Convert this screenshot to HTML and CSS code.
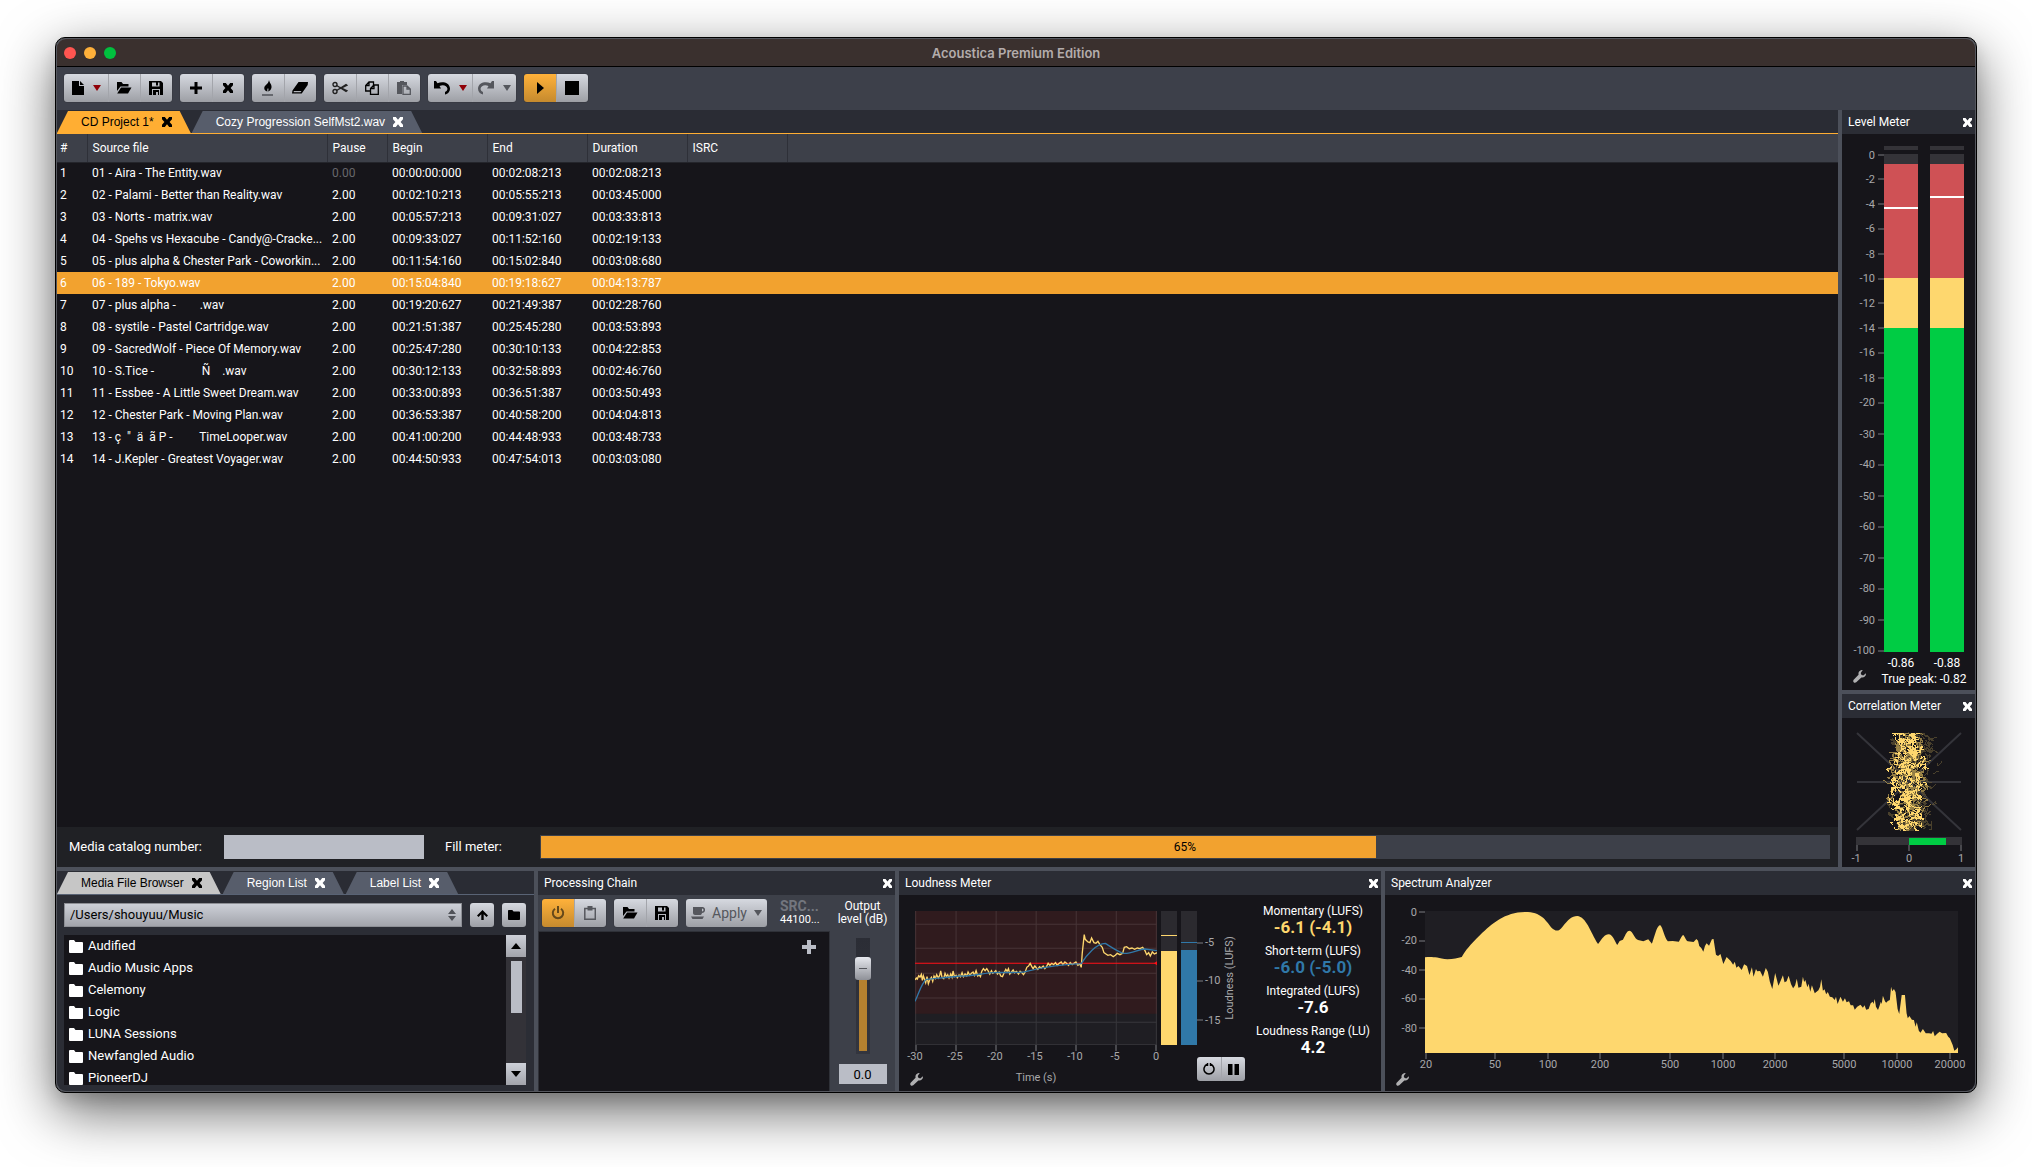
FILE: index.html
```html
<!DOCTYPE html>
<html lang="en">
<head>
<meta charset="utf-8">
<title>Acoustica Premium Edition</title>
<link rel="stylesheet" href="styles.css">
</head>
<body>
<svg class="defs" aria-hidden="true">
  <symbol id="i-x" viewBox="0 0 10 10"><path d="M0 2.2V0h2.8L5 2.8 7.2 0H10v2.2L7.6 5 10 7.8V10H7.2L5 7.2 2.8 10H0V7.8L2.400 5z"/></symbol>
  <symbol id="i-folder" viewBox="0 0 14 13"><path d="M1 0h4l1.500 2H13a1 1 0 0 1 1 1v9a1 1 0 0 1-1 1H1a1 1 0 0 1-1-1V1a1 1 0 0 1 1-1z"/></symbol>
  <symbol id="i-open" viewBox="0 0 16 14"><path d="M1 1h4.500l1.500 2h5.500v2.500H4.500L1 10z"/><path d="M5 6.500h10.500L12 12.500H1.200z"/></symbol>
  <symbol id="i-save" viewBox="0 0 14 14"><path fill-rule="evenodd" d="M0 0h12l2 2v12H0zM3 1.500v4h7.500v-4H9v3H7v-3zM3 8v6h8V8z"/><path d="M4 9h6v5H9v-3H7v3H4z"/></symbol>
  <symbol id="i-wrench" viewBox="0 0 14 14"><path d="M10.500 0 8.300 3.200l.7 2 2 .7L14 3.500c.3 3-2.300 5.200-5 4.500L3.500 13.300C1.500 14.800-.8 12.500.7 10.500L6 5C5.300 2 7.500-.3 10.500 0z"/></symbol>
  <symbol id="i-down" viewBox="0 0 8 6"><path d="M0 0h8L4 6z"/></symbol>
</svg>

<main class="window">
  <header class="titlebar">
    <div class="lights"><i class="red"></i><i class="amber"></i><i class="green"></i></div>
    <h1>Acoustica Premium Edition</h1>
  </header>

  <nav class="toolbar" aria-label="Main toolbar">
    <div class="group">
      <button class="wide" aria-label="New"><svg width="12" height="14" viewBox="0 0 12 14"><path d="M0 0h7v5h5v9H0z"/><path d="M8 0l4 4H8z"/></svg><svg class="caret" width="8" height="6"><use href="#i-down"/></svg></button>
      <button aria-label="Open"><svg width="16" height="14"><use href="#i-open"/></svg></button>
      <button aria-label="Save"><svg width="14" height="14"><use href="#i-save"/></svg></button>
    </div>
    <div class="group">
      <button aria-label="Add"><svg width="12" height="12" viewBox="0 0 12 12"><path d="M4.500 0h3v4.500H12v3H7.500V12h-3V7.500H0v-3h4.500z"/></svg></button>
      <button aria-label="Remove"><svg width="10" height="10"><use href="#i-x"/></svg></button>
    </div>
    <div class="group">
      <button aria-label="Burn"><svg width="12" height="16" viewBox="0 0 12 16"><path d="M7 0c.5 3 3 4.500 2.500 7.500C9.200 9.800 7.500 11 6 11.500c.8-1.500.5-2.500 0-3.500-.6 1-1 2-.5 3.500C3 11 2 9.500 2.300 7.500 3 5 6.500 4 7 0z"/><path fill="#66686e" d="M0 14h11v2H0z"/></svg></button>
      <button aria-label="Erase"><svg width="16" height="12" viewBox="0 0 16 12"><path fill-rule="evenodd" d="M6.500 0H16l-.3 3-6 8.500H0L.5 8.500zM1.800 9l-.2 1.300h6.900L9.500 9z"/></svg></button>
    </div>
    <div class="group">
      <button aria-label="Cut"><svg width="16" height="14" viewBox="0 0 16 14" fill="none" stroke="#222" stroke-width="1.400"><circle cx="3" cy="3.500" r="2"/><circle cx="3" cy="10.500" r="2"/><path d="M4.700 4.500 14 10.500l1-.8-7.500-3.500M4.700 9.500 14 3.500l1 .8-7.500 3.500"/></svg></button>
      <button aria-label="Copy"><svg width="14" height="14" viewBox="0 0 14 14" fill="none" stroke="#000" stroke-width="1.300"><path d="M5.500 10H.7V4.500L4 1h4.500v3.500M.7 4.500H4V1"/><path d="M5.500 7.500 9 4h4.300v9.300H5.500zM5.500 7.500H9V4"/></svg></button>
      <button class="dim" aria-label="Paste"><svg width="14" height="14" viewBox="0 0 14 14"><path d="M0 1h3V0h4v1h3v3H5v9H0z"/><path fill="none" stroke="#55575d" stroke-width="1.300" d="M6 5h4l3.300 3v5.300H6zM10 5v3h3.300"/></svg></button>
    </div>
    <div class="group">
      <button class="wide" aria-label="Undo"><svg width="16" height="14" viewBox="0 0 16 14"><path d="M0 0h2l1.500 2.200C8 0 15.500 1 16 7.500c0 3-2 5.500-5 6V11c2-.8 2.500-2 2.400-3.500C13 4.500 9 3.200 5.500 5L7 7.500H0z"/></svg><svg class="caret" width="8" height="6"><use href="#i-down"/></svg></button>
      <button class="wide dim" aria-label="Redo"><svg width="16" height="14" viewBox="0 0 16 14"><path d="M16 0h-2l-1.500 2.200C8 0 .5 1 0 7.500c0 3 2 5.500 5 6V11c-2-.8-2.500-2-2.400-3.500C3 4.500 7 3.200 10.500 5L9 7.500h7z"/></svg><svg width="8" height="6"><use href="#i-down"/></svg></button>
    </div>
    <div class="group">
      <button class="on" aria-label="Play"><svg width="7" height="12" viewBox="0 0 7 12"><path d="M0 0l7 6-7 6z"/></svg></button>
      <button aria-label="Stop"><svg width="14" height="14" viewBox="0 0 14 14"><path d="M0 0h14v14H0z"/></svg></button>
    </div>
  </nav>

  <div class="workspace">
    <section class="project">
      <div class="tabs gold">
        <div class="tab active"><button>CD Project 1*</button><button class="x" aria-label="Close CD Project 1"><svg width="10" height="10"><use href="#i-x"/></svg></button></div>
        <div class="tab"><button>Cozy Progression SelfMst2.wav</button><button class="x" aria-label="Close Cozy Progression"><svg width="10" height="10"><use href="#i-x"/></svg></button></div>
      </div>
      <div class="tracks">
        <table>
          <colgroup><col class="c-num"><col class="c-file"><col class="c-pause"><col class="c-time"><col class="c-time"><col class="c-time"><col class="c-time"><col></colgroup>
          <thead><tr><th>#</th><th>Source file</th><th>Pause</th><th>Begin</th><th>End</th><th>Duration</th><th>ISRC</th><th></th></tr></thead>
          <tbody>
            <tr><td>1</td><td>01 - Aira - The Entity.wav</td><td class="off">0.00</td><td>00:00:00:000</td><td>00:02:08:213</td><td>00:02:08:213</td><td></td><td></td></tr>
            <tr><td>2</td><td>02 - Palami - Better than Reality.wav</td><td>2.00</td><td>00:02:10:213</td><td>00:05:55:213</td><td>00:03:45:000</td><td></td><td></td></tr>
            <tr><td>3</td><td>03 - Norts - matrix.wav</td><td>2.00</td><td>00:05:57:213</td><td>00:09:31:027</td><td>00:03:33:813</td><td></td><td></td></tr>
            <tr><td>4</td><td>04 - Spehs vs Hexacube - Candy@-Cracke...</td><td>2.00</td><td>00:09:33:027</td><td>00:11:52:160</td><td>00:02:19:133</td><td></td><td></td></tr>
            <tr><td>5</td><td>05 - plus alpha &amp; Chester Park - Coworkin...</td><td>2.00</td><td>00:11:54:160</td><td>00:15:02:840</td><td>00:03:08:680</td><td></td><td></td></tr>
            <tr class="selected"><td>6</td><td>06 - 189 - Tokyo.wav</td><td>2.00</td><td>00:15:04:840</td><td>00:19:18:627</td><td>00:04:13:787</td><td></td><td></td></tr>
            <tr><td>7</td><td>07 - plus alpha -        .wav</td><td>2.00</td><td>00:19:20:627</td><td>00:21:49:387</td><td>00:02:28:760</td><td></td><td></td></tr>
            <tr><td>8</td><td>08 - systile - Pastel Cartridge.wav</td><td>2.00</td><td>00:21:51:387</td><td>00:25:45:280</td><td>00:03:53:893</td><td></td><td></td></tr>
            <tr><td>9</td><td>09 - SacredWolf - Piece Of Memory.wav</td><td>2.00</td><td>00:25:47:280</td><td>00:30:10:133</td><td>00:04:22:853</td><td></td><td></td></tr>
            <tr><td>10</td><td>10 - S.Tice -                Ñ    .wav</td><td>2.00</td><td>00:30:12:133</td><td>00:32:58:893</td><td>00:02:46:760</td><td></td><td></td></tr>
            <tr><td>11</td><td>11 - Essbee - A Little Sweet Dream.wav</td><td>2.00</td><td>00:33:00:893</td><td>00:36:51:387</td><td>00:03:50:493</td><td></td><td></td></tr>
            <tr><td>12</td><td>12 - Chester Park - Moving Plan.wav</td><td>2.00</td><td>00:36:53:387</td><td>00:40:58:200</td><td>00:04:04:813</td><td></td><td></td></tr>
            <tr><td>13</td><td>13 - ç  "  ä  ã P -         TimeLooper.wav</td><td>2.00</td><td>00:41:00:200</td><td>00:44:48:933</td><td>00:03:48:733</td><td></td><td></td></tr>
            <tr><td>14</td><td>14 - J.Kepler - Greatest Voyager.wav</td><td>2.00</td><td>00:44:50:933</td><td>00:47:54:013</td><td>00:03:03:080</td><td></td><td></td></tr>
          </tbody>
        </table>
      </div>
      <div class="catalog">
        <label class="l-catalog" for="mcn">Media catalog number:</label>
        <input id="mcn" type="text">
        <span class="l-fill" id="fill-label">Fill meter:</span>
        <div class="fill" role="progressbar" aria-labelledby="fill-label" aria-valuenow="65"><div class="fill-bar" style="width:64.8%"></div><span>65%</span></div>
      </div>
    </section>

    <aside class="meters">
      <section class="panel grow">
        <header class="panel-head"><h2>Level Meter</h2><button class="x" aria-label="Close Level Meter"><svg width="9" height="9"><use href="#i-x"/></svg></button></header>
        <svg class="chart" width="133" height="556">
          <g fill="#343338"><path d="M42 12h34v4H42zM88 12h34v4H88zM42 20h34v12H42zM88 20h34v12H88z"/></g>
          <g fill="#cf5155"><path d="M42 30h34v114H42zM88 30h34v114H88z"/></g>
          <g fill="#fed76e"><path d="M42 144h34v50H42zM88 144h34v50H88z"/></g>
          <g fill="#00cc44"><path d="M42 194h34v324H42zM88 194h34v324H88z"/></g>
          <g fill="#fff"><path d="M42 73h34v2H42zM88 62h34v2H88z"/></g>
          <path class="tick" d="M36 21h6M36 45h6M36 70h6M36 95h6M36 120h6M36 145h6M36 169h6M36 194h6M36 219h6M36 244h6M36 269h6M36 300h6M36 331h6M36 362h6M36 393h6M36 424h6M36 455h6M36 486h6M36 517h6"/>
          <g class="axis end">
            <text x="33" y="25">0</text><text x="33" y="49">-2</text><text x="33" y="74">-4</text><text x="33" y="98">-6</text><text x="33" y="124">-8</text><text x="33" y="148">-10</text><text x="33" y="173">-12</text><text x="33" y="198">-14</text><text x="33" y="222">-16</text><text x="33" y="248">-18</text><text x="33" y="272">-20</text><text x="33" y="304">-30</text><text x="33" y="334">-40</text><text x="33" y="366">-50</text><text x="33" y="396">-60</text><text x="33" y="428">-70</text><text x="33" y="458">-80</text><text x="33" y="490">-90</text><text x="33" y="520">-100</text>
          </g>
          <g class="value mid"><text x="59" y="533">-0.86</text><text x="105" y="533">-0.88</text><text x="82" y="549">True peak: -0.82</text></g>
          <use href="#i-wrench" x="11" y="536" width="13" height="13" fill="#b0b0b2"/>
        </svg>
      </section>
      <section class="panel">
        <header class="panel-head"><h2>Correlation Meter</h2><button class="x" aria-label="Close Correlation Meter"><svg width="9" height="9"><use href="#i-x"/></svg></button></header>
        <svg class="chart" width="133" height="149">
          <path stroke="#34343a" stroke-width="2" d="M15 15 119 112M15 112 119 15M15 64H119"/>
          <g id="scope" shape-rendering="crispEdges"></g>
          <path fill="#343338" d="M14 119h106v8H14z"/>
          <path fill="#00cc44" d="M67 120h37v7H67z"/>
          <path class="tick" d="M15 127v6M67 127v6M119 127v6"/>
          <g class="axis mid"><text x="14" y="144">-1</text><text x="67" y="144">0</text><text x="119" y="144">1</text></g>
        </svg>
      </section>
    </aside>
  </div>

  <div class="dock">
    <section class="browser">
      <div class="tabs">
        <div class="tab active"><button>Media File Browser</button><button class="x" aria-label="Close Media File Browser"><svg width="10" height="10"><use href="#i-x"/></svg></button></div>
        <div class="tab"><button>Region List</button><button class="x" aria-label="Close Region List"><svg width="10" height="10"><use href="#i-x"/></svg></button></div>
        <div class="tab"><button>Label List</button><button class="x" aria-label="Close Label List"><svg width="10" height="10"><use href="#i-x"/></svg></button></div>
      </div>
      <div class="path">
        <div class="combo">
          <select aria-label="Folder"><option>/Users/shouyuu/Music</option></select>
          <svg width="8" height="12" viewBox="0 0 8 12"><path d="M0 5h8L4 0zM0 7h8l-4 5z"/></svg>
        </div>
        <button class="square" aria-label="Parent folder"><svg width="11" height="10" viewBox="0 0 11 10"><path d="M5.500 0 11 5.500 9.500 7 6.700 4.300V10H4.300V4.300L1.500 7 0 5.500z"/></svg></button>
        <button class="square" aria-label="Favorite folders"><svg width="12" height="10" viewBox="0 0 14 13" preserveAspectRatio="none"><use href="#i-folder"/></svg></button>
      </div>
      <div class="files">
        <ul>
          <li><svg width="14" height="13"><use href="#i-folder"/></svg>Audified</li>
          <li><svg width="14" height="13"><use href="#i-folder"/></svg>Audio Music Apps</li>
          <li><svg width="14" height="13"><use href="#i-folder"/></svg>Celemony</li>
          <li><svg width="14" height="13"><use href="#i-folder"/></svg>Logic</li>
          <li><svg width="14" height="13"><use href="#i-folder"/></svg>LUNA Sessions</li>
          <li><svg width="14" height="13"><use href="#i-folder"/></svg>Newfangled Audio</li>
          <li><svg width="14" height="13"><use href="#i-folder"/></svg>PioneerDJ</li>
        </ul>
        <div class="scroll">
          <button aria-label="Scroll up"><svg width="10" height="6" viewBox="0 0 10 6"><path d="M0 6h10L5 0z"/></svg></button>
          <div class="thumb"></div>
          <button aria-label="Scroll down"><svg width="10" height="6" viewBox="0 0 10 6"><path d="M0 0h10L5 6z"/></svg></button>
        </div>
      </div>
    </section>

    <section class="panel chain">
      <header class="panel-head"><h2>Processing Chain</h2><button class="x" aria-label="Close Processing Chain"><svg width="9" height="9"><use href="#i-x"/></svg></button></header>
      <div class="chain-body">
        <div class="chain-main">
          <div class="chain-tools">
            <div class="group">
              <button class="on" aria-label="Enable"><svg width="14" height="14" viewBox="0 0 14 14" fill="none" stroke="#66491a" stroke-width="2"><path d="M4 2.800a5.200 5.200 0 1 0 6 0M7 0v7"/></svg></button>
              <button class="dim" aria-label="Paste chain"><svg width="12" height="14" viewBox="0 0 12 14"><path fill="none" stroke="#55575d" stroke-width="1.500" d="M.8 2.500h10.500v10.700H.8z"/><path d="M3.500 0h5v4.500h-5z"/></svg></button>
            </div>
            <div class="group">
              <button aria-label="Open chain"><svg width="16" height="14"><use href="#i-open"/></svg></button>
              <button aria-label="Save chain"><svg width="14" height="14"><use href="#i-save"/></svg></button>
            </div>
            <button class="apply dim"><svg width="14" height="12" viewBox="0 0 14 12"><path fill-rule="evenodd" d="M2 0h9.500C15 0 15 6 11 6c-.3 1.500-1 2-2 2H4C3 8 2 7 2 6zm9 1.500v3c2 0 2-3 0-3zM0 9.500h13L11.500 12h-10z"/></svg><span>Apply</span><svg width="8" height="6"><use href="#i-down"/></svg></button>
            <p class="src"><b>SRC...</b><span>44100...</span></p>
          </div>
          <div class="slots"><button aria-label="Add effect"><svg width="14" height="14" viewBox="0 0 14 14"><path d="M5 0h4v5h5v4H9v5H5V9H0V5h5z"/></svg></button></div>
        </div>
        <div class="output">
          <label for="level">Output<br>level (dB)</label>
          <input id="level" type="range" min="0" max="100" value="80">
          <input class="db" type="text" value="0.0" aria-label="Output level in dB">
        </div>
      </div>
    </section>

    <section class="panel">
      <header class="panel-head"><h2>Loudness Meter</h2><button class="x" aria-label="Close Loudness Meter"><svg width="9" height="9"><use href="#i-x"/></svg></button></header>
      <div class="loud">
        <svg class="chart" width="298" height="196">
          <svg x="16" y="16" width="242" height="134" viewBox="76 153 725 402" preserveAspectRatio="none">
            <path fill="#1f1e23" d="M76 153h725v402H76z"/>
            <path fill="#301b1e" d="M76 153h725v308H76z"/>
            <path stroke="#fff" stroke-opacity=".11" stroke-width="3" d="M78 153v402M199 153v402M319 153v402M439 153v402M559 153v402M679 153v402M799 153v402M76 193h725M76 265h725M76 340h725M76 414h725M76 487h725M76 554h725"/>
            <path stroke="#ff1018" stroke-width="3" d="M76 310h725"/>
            <path fill="#ff1018" d="M792 310l9-6v12z"/>
            <path fill="none" stroke="#fed76e" stroke-width="4" d="M76 360 80 354 83 357 87 347 91 351 95 343 98 361 101 347 105 359 108 368 112 350 116 371 120 360 125 352 129 364 133 348 137 355 141 344 146 354 150 346 153 333 157 352 162 356 166 340 170 350 174 344 178 354 183 342 187 352 190 333 194 350 199 346 203 353 208 345 212 350 217 338 221 350 226 342 231 348 235 336 240 346 245 340 250 336 254 346 259 332 264 348 268 344 272 350 276 334 281 326 286 332 291 326 296 334 300 342 305 332 309 340 314 336 318 332 323 342 328 336 333 348 338 350 343 338 348 328 352 334 356 326 360 342 365 336 370 330 374 338 380 334 386 342 391 334 396 338 401 344 406 336 411 322 416 318 421 310 426 320 430 326 435 318 440 324 444 328 449 320 454 324 460 318 465 326 470 320 475 310 480 316 486 310 491 314 497 308 502 316 508 310 514 306 519 314 525 306 530 310 536 316 541 308 547 314 552 310 558 306 564 316 570 312 574 322 577 280 583 224 586 238 594 246 600 248 605 234 612 248 618 250 624 244 630 254 637 262 642 278 648 282 654 286 662 284 670 290 676 286 682 280 690 284 698 280 703 262 710 260 718 266 726 264 734 268 742 264 750 266 758 262 765 272 770 284 776 278 781 288 787 276 793 282 801 278"/>
            <path fill="none" stroke="#3078a8" stroke-width="4" d="M76 424C88 400 95 370 110 358 150 354 180 352 210 348 250 350 280 338 320 337 360 337 390 340 410 334 460 322 520 312 574 311 590 285 620 250 646 250 665 262 685 276 700 280 725 282 745 267 765 267L801 272"/>
          </svg>
          <path fill="#2b2a2f" d="M262 16h16v134h-16zM282 16h16v134h-16z"/>
          <path fill="#fed76e" d="M262 56h16v94h-16zM262 40h16v1h-16z"/>
          <path fill="#3078a8" d="M282 55h16v95h-16zM282 47h16v1h-16z"/>
          <path class="tick" d="M17 150v6M57 150v6M97 150v6M137 150v6M177 150v6M217 150v6M257 150v6"/>
          <g class="axis mid"><text x="16" y="165">-30</text><text x="56" y="165">-25</text><text x="96" y="165">-20</text><text x="136" y="165">-15</text><text x="176" y="165">-10</text><text x="216" y="165">-5</text><text x="257" y="165">0</text><text x="137" y="186">Time (s)</text></g>
          <use href="#i-wrench" x="11" y="178" width="13" height="13" fill="#b0b0b2"/>
        </svg>
        <div class="loud-side">
          <svg class="chart" width="48" height="162">
            <path class="tick" d="M0 48h6M0 86h6M0 125h6"/>
            <g class="axis"><text x="8" y="51">-5</text><text x="8" y="89">-10</text><text x="8" y="129">-15</text></g>
            <g class="axis mid"><text transform="translate(36 83) rotate(-90)">Loudness (LUFS)</text></g>
          </svg>
          <div class="group small">
            <button aria-label="Reset"><svg width="12" height="12" viewBox="0 0 12 12" fill="none" stroke="#000" stroke-width="1.500"><path d="M4.500 1.300a5 5 0 1 0 3 0M4.500 0v3M7.500 0v3"/></svg></button>
            <button aria-label="Pause"><svg width="11" height="11" viewBox="0 0 11 11"><path d="M0 0h4.500v11H0zM6.500 0H11v11H6.500z"/></svg></button>
          </div>
        </div>
        <dl>
          <dt>Momentary (LUFS)</dt><dd class="yellow">-6.1 (-4.1)</dd>
          <dt>Short-term (LUFS)</dt><dd class="blue">-6.0 (-5.0)</dd>
          <dt>Integrated (LUFS)</dt><dd>-7.6</dd>
          <dt>Loudness Range (LU)</dt><dd>4.2</dd>
        </dl>
      </div>
    </section>

    <section class="panel">
      <header class="panel-head"><h2>Spectrum Analyzer</h2><button class="x" aria-label="Close Spectrum Analyzer"><svg width="9" height="9"><use href="#i-x"/></svg></button></header>
      <svg class="chart" width="590" height="196">
        <svg x="40" y="16" width="533" height="142" viewBox="135 153 1306 426" preserveAspectRatio="none">
          <path fill="#1f1e23" d="M135 153h1306v426H135z"/>
          <path fill="#fed76e" d="M135 292C150 289 160 291 190 298 205 297 215 294 225 291 235 270 245 255 270 225 300 190 330 157 380 156 420 156 430 180 445 203 455 214 462 216 472 200 485 180 495 168 508 168 530 170 540 215 559 252 570 235 575 223 585 223 595 223 600 245 606 255L612 243 620 239C628 220 630 212 636 212 645 214 648 236 657 240L670 244 682 238 691 251C700 220 703 198 711 195 718 202 722 235 730 244L742 243 757 245C762 235 764 226 768 225 773 232 775 243 779 244L793 246 800 237 804 242 807 258 812 264 817 275 821 258 825 250 831 257 838 238 842 237 848 284 853 288 859 282 866 312 874 291 884 303 890 314 894 305 898 323 903 318 911 330 917 313 924 318 930 345 936 322 940 350 946 327 949 334 956 333 963 350 970 324 975 335 980 365 986 387 993 339 1001 377 1007 361 1012 346 1016 367 1021 364 1026 347 1032 373 1037 385 1042 376 1046 356 1050 383 1057 380 1061 350 1064 366 1067 360 1072 382 1075 371 1079 395 1083 376 1090 400 1099 391 1103 380 1106 358 1110 392 1114 388 1118 403 1122 396 1127 410 1133 412 1139 420 1142 410 1146 432 1153 410 1159 425 1164 415 1168 427 1174 424 1178 436 1184 436 1188 449 1194 440 1202 434 1208 443 1212 436 1216 449 1222 447 1227 430 1232 425 1234 432 1237 417 1240 440 1245 450 1248 440 1252 425 1254 432 1257 407 1262 424 1265 428 1269 423 1274 420 1277 380 1280 394 1284 387 1288 396 1293 447 1297 462 1303 405 1311 405 1315 460 1318 475 1322 468 1328 479 1333 480 1337 500 1340 487 1345 512 1349 518 1355 507 1362 520 1370 520 1376 521 1380 513 1384 529 1390 521 1396 515 1402 520 1412 519 1417 530 1421 535 1428 555 1432 572 1437 568 1441 562V579H135z"/>
        </svg>
        <path class="tick" d="M34 17h6M34 46h6M34 75h6M34 104h6M34 133h6M41 158v6M110 158v6M163 158v6M215 158v6M285 158v6M338 158v6M390 158v6M459 158v6M512 158v6M565 158v6"/>
        <g class="axis end"><text x="32" y="21">0</text><text x="32" y="49">-20</text><text x="32" y="79">-40</text><text x="32" y="107">-60</text><text x="32" y="137">-80</text></g>
        <g class="axis mid"><text x="41" y="173">20</text><text x="110" y="173">50</text><text x="163" y="173">100</text><text x="215" y="173">200</text><text x="285" y="173">500</text><text x="338" y="173">1000</text><text x="390" y="173">2000</text><text x="459" y="173">5000</text><text x="512" y="173">10000</text><text x="565" y="173">20000</text></g>
        <use href="#i-wrench" x="11" y="178" width="13" height="13" fill="#b0b0b2"/>
      </svg>
    </section>
  </div>
</main>
<script src="scope.js"></script>
</body>
</html>
```
FILE: styles.css
```css
* { box-sizing: border-box; margin: 0; padding: 0; }
body {
  min-height: 100vh;
  padding: 37px 55px 74px;
  display: flex;
  background: #fff;
  font: 12px/16px Roboto, "Liberation Sans", sans-serif;
  color: #fff;
}
.defs { position: absolute; width: 0; height: 0; }
svg { display: block; flex: none; }
button { border: 0; background: none; font: inherit; color: inherit; fill: currentColor; display: flex; align-items: center; justify-content: center; }
h1, h2 { font-size: 12px; font-weight: 400; }

.window {
  flex: 1;
  min-width: 0;
  display: flex;
  flex-direction: column;
  border: 1px solid #000;
  border-radius: 10px;
  padding: 1px;
  background: #55575e;
  overflow: hidden;
  box-shadow: 0 18px 55px rgba(0, 0, 0, .6), 0 8px 16px rgba(0, 0, 0, .12);
}
.titlebar {
  height: 28px;
  display: grid;
  grid-template-columns: 1fr auto 1fr;
  align-items: center;
  background: #3a302e;
  border-bottom: 1px solid #000;
  border-radius: 9px 9px 0 0;
}
.titlebar h1 { font: 600 13px/16px Inter, sans-serif; color: #b3acab; }
.lights { display: flex; gap: 8px; padding-left: 7px; }
.lights i { width: 12px; height: 12px; border-radius: 50%; }
.red { background: #ff5550; }
.amber { background: #ffb03a; }
.green { background: #00c03e; }

.toolbar { display: flex; gap: 8px; height: 43px; padding: 7px; background: #3d404a; }
.group { display: flex; height: 28px; border-radius: 3px; overflow: hidden; box-shadow: 0 0 1px #14151a; }
.group button, .apply {
  width: 32px;
  color: #000;
  background: linear-gradient(#d6d9e0, #9d9fa5);
}
.group button + button { box-shadow: inset 1px 0 #a3a5ab; }
.group .wide { width: 44px; gap: 9px; }
.group .on { background: linear-gradient(#ffb13a, #c58a2e); }
.group .dim, .dim { color: #55575d; }
.caret { color: #900008; fill: #900008; }

.workspace { flex: 1; display: flex; gap: 4px; background: #4c505a; }
.project { flex: 1; min-width: 0; display: flex; flex-direction: column; background: #16151a; }
.tabs { display: flex; align-items: flex-end; gap: 1px; height: 24px; background: #2a2c34; border-bottom: 1px solid #596375; font: 12px/16px "Liberation Sans", Arial, sans-serif; }
.tab {
  display: flex;
  align-items: center;
  gap: 8px;
  height: 22px;
  padding: 0 19px 0 24px;
  background: #575d6b;
  clip-path: polygon(11px 0, calc(100% - 11px) 0, 100% 100%, 0 100%);
}
.tab.active { background: #c6c6c6; color: #000; }
.gold { border-color: #ffae33; }
.gold .tab.active { background: #ffae33; }

.tracks { flex: 1; }
table { width: 100%; table-layout: fixed; border-collapse: collapse; }
.c-num { width: 30px; }
.c-file { width: 240px; }
.c-pause { width: 60px; }
.c-time { width: 100px; }
th { height: 28px; padding-left: 5px; text-align: left; font-weight: 400; background: #3d4049; border-right: 1px solid #2e3038; border-bottom: 1px solid #24252b; }
th:last-child { border-right: 0; }
td { height: 22px; padding-left: 5px; white-space: pre; overflow: hidden; }
th:first-child, td:first-child { padding-left: 3px; }
.off { color: #68686c; }
.selected { background: #f2a22f; }

.catalog { display: flex; align-items: center; height: 40px; padding: 0 8px 0 12px; background: #202125; font-size: 13px; }
.l-catalog { width: 155px; }
.catalog input { width: 200px; height: 24px; border: 0; background: #babdc6; }
.l-fill { width: 116px; padding-left: 21px; }
.fill { flex: 1; height: 24px; padding: 1px; background: #3d4049; display: grid; align-items: center; font-size: 12px; }
.fill > * { grid-area: 1 / 1; }
.fill-bar { height: 22px; background: #f2a22f; }
.fill span { color: #000; text-align: center; }

.meters { width: 133px; display: flex; flex-direction: column; gap: 4px; }
.panel { min-width: 0; overflow: hidden; background: #16151a; }
.grow { flex: 1; }
.panel-head { display: flex; align-items: center; justify-content: space-between; height: 24px; padding: 0 3px 0 6px; background: #2b2d35; }
.tick { stroke: #48484d; stroke-width: 2; fill: none; }
.chart text { font-size: 12px; }
.axis { fill: #a8a8aa; }
.chart .axis text { font-size: 11px; }
.value { fill: #fff; }
.end { text-anchor: end; }
.mid { text-anchor: middle; }

.dock { display: grid; grid-template-columns: 477fr 357fr 482fr 590fr; gap: 4px; height: 224px; padding-top: 4px; background: #4c505a; border-radius: 0 0 9px 9px; overflow: hidden; }
.browser { background: #2b2d35; min-width: 0; }
.browser .tabs { gap: 2px; padding-top: 1px; }
.path { display: flex; gap: 8px; padding: 8px 8px 8px 7px; }
.combo { flex: 1; display: grid; align-items: center; }
.combo > * { grid-area: 1 / 1; }
.combo select { appearance: none; width: 100%; height: 24px; padding-left: 5px; border: 1px solid #8d8f95; background: linear-gradient(#cdd0d8, #a2a4ab); color: #000; font: inherit; font-size: 13px; }
.combo svg { justify-self: end; margin-right: 6px; fill: #505258; pointer-events: none; }
.square { width: 24px; height: 24px; border-radius: 3px; color: #000; background: linear-gradient(#d6d9e0, #9d9fa5); }
.files { display: flex; height: 150px; margin: 0 8px 0 7px; background: #16151a; }
.files ul { flex: 1; list-style: none; overflow: hidden; }
.files li { display: flex; align-items: center; gap: 5px; height: 22px; padding-left: 5px; font-size: 13px; fill: #fff; }
.scroll { width: 20px; display: flex; flex-direction: column; align-items: center; background: #333238; }
.scroll button { width: 20px; height: 22px; color: #000; background: linear-gradient(#cdd0d8, #a2a4ab); }
.thumb { width: 11px; height: 52px; margin: 4px 0 auto; background: #babdc6; }

.chain { display: flex; flex-direction: column; background: #3d4049; }
.chain-body { flex: 1; display: flex; }
.chain-main { flex: 1; min-width: 0; display: flex; flex-direction: column; }
.chain-tools { display: flex; gap: 8px; padding: 4px; height: 36px; }
.apply { width: 81px; gap: 7px; height: 28px; border-radius: 3px; font-size: 14px; }
.src { display: flex; flex-direction: column; padding-left: 5px; font-size: 11px; line-height: 14px; }
.src b { font-size: 14px; font-weight: 700; color: #73767e; }
.slots { flex: 1; border: 1px solid #2f3138; border-bottom: 0; background: #16151a; }
.slots button { margin: 8px 13px 0 auto; color: #babdc6; }
.output { width: 65px; display: flex; flex-direction: column; align-items: center; padding-top: 5px; text-align: center; line-height: 13px; }
.output label { white-space: nowrap; }
#level {
  appearance: none;
  writing-mode: vertical-lr;
  direction: rtl;
  width: 16px;
  height: 116px;
  margin: 12px 0 10px;
  background:
    linear-gradient(#b5812f, #b5812f) 4px 30px / 8px 83px no-repeat,
    linear-gradient(#2b2d35, #33353e) 1px 0 / 14px 116px no-repeat;
}
#level::-webkit-slider-thumb {
  appearance: none;
  width: 16px;
  height: 23px;
  border-radius: 3px;
  background: linear-gradient(#55575d, #55575d) 4px 11px / 8px 1px no-repeat, linear-gradient(#e6e8ee, #8f9198);
}
.db { width: 48px; height: 20px; border: 0; background: #babdc6; color: #000; font: 13px/16px Roboto, sans-serif; text-align: center; }

.loud { display: flex; }
.loud-side { width: 48px; }
.small { height: 24px; }
.small button { width: 24px; }
.loud dl { flex: 1; padding: 8px 0 0 0; text-align: center; }
.loud dt { height: 16px; white-space: nowrap; }
.loud dd { height: 24px; font-size: 17px; font-weight: 700; line-height: 17px; }
.yellow { color: #fed76e; }
.blue { color: #3078a8; }
```
FILE: scope.js
```js
// Stereo scope trace: a tall cloud of short samples round the centre line.
const scope = document.getElementById("scope");
let seed = 7;
const rnd = () => (seed = (seed * 16807) % 2147483647) / 2147483647;
const trace = (n, color, opacity, cx, spread) => {
  let d = "";
  for (let i = 0; i < n; i++) {
    const y = 15 + rnd() * 96;
    const half = spread * Math.sqrt(Math.sin(Math.PI * (0.2 + (0.6 * (y - 15)) / 97)));
    let x = cx + (rnd() + rnd() - 1) * half, py = y;
    d += `M${x.toFixed(0)} ${py.toFixed(0)}`;
    for (let k = 0; k < 4; k++) {
      x += (rnd() - 0.5) * 7;
      py = Math.min(112, Math.max(15, py + (rnd() - 0.5) * 7));
      d += `L${x.toFixed(0)} ${py.toFixed(0)}`;
    }
  }
  const p = document.createElementNS("http://www.w3.org/2000/svg", "path");
  p.setAttribute("d", d);
  p.setAttribute("fill", "none");
  p.setAttribute("stroke", color);
  p.setAttribute("stroke-opacity", opacity);
  scope.append(p);
};
trace(220, "#6d5e38", 0.6, 71, 25);
trace(260, "#b1964f", 0.8, 66, 20);
trace(190, "#fed76e", 1, 66, 22);
```
